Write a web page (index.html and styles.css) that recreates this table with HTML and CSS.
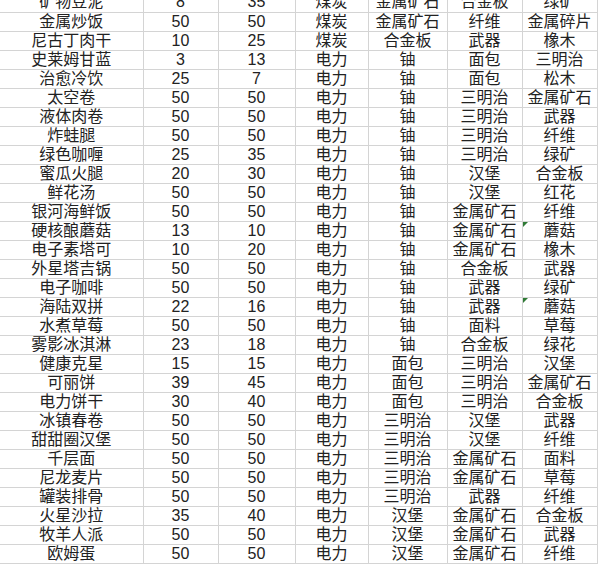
FILE: index.html
```html
<!DOCTYPE html>
<html lang="zh-CN">
<head>
<meta charset="utf-8">
<link rel="stylesheet" href="styles.css">
</head>
<body>
<div class="sheet">
<table class="grid">
<colgroup><col class="c1"><col class="c2"><col class="c3"><col class="c4"><col class="c5"><col class="c6"><col class="c7"></colgroup>
<tbody>
<tr><td>矿物豆泥</td><td>8</td><td>35</td><td>煤炭</td><td>金属矿石</td><td>合金板</td><td>绿矿</td></tr>
<tr><td>金属炒饭</td><td>50</td><td>50</td><td>煤炭</td><td>金属矿石</td><td>纤维</td><td>金属碎片</td></tr>
<tr><td>尼古丁肉干</td><td>10</td><td>25</td><td>煤炭</td><td>合金板</td><td>武器</td><td>橡木</td></tr>
<tr><td>史莱姆甘蓝</td><td>3</td><td>13</td><td>电力</td><td>铀</td><td>面包</td><td>三明治</td></tr>
<tr><td>治愈冷饮</td><td>25</td><td>7</td><td>电力</td><td>铀</td><td>面包</td><td>松木</td></tr>
<tr><td>太空卷</td><td>50</td><td>50</td><td>电力</td><td>铀</td><td>三明治</td><td>金属矿石</td></tr>
<tr><td>液体肉卷</td><td>50</td><td>50</td><td>电力</td><td>铀</td><td>三明治</td><td>武器</td></tr>
<tr><td>炸蛙腿</td><td>50</td><td>50</td><td>电力</td><td>铀</td><td>三明治</td><td>纤维</td></tr>
<tr><td>绿色咖喱</td><td>25</td><td>35</td><td>电力</td><td>铀</td><td>三明治</td><td>绿矿</td></tr>
<tr><td>蜜瓜火腿</td><td>20</td><td>30</td><td>电力</td><td>铀</td><td>汉堡</td><td>合金板</td></tr>
<tr><td>鲜花汤</td><td>50</td><td>50</td><td>电力</td><td>铀</td><td>汉堡</td><td>红花</td></tr>
<tr><td>银河海鲜饭</td><td>50</td><td>50</td><td>电力</td><td>铀</td><td>金属矿石</td><td>纤维</td></tr>
<tr><td>硬核酿蘑菇</td><td>13</td><td>10</td><td>电力</td><td>铀</td><td>金属矿石</td><td class="flag">蘑菇</td></tr>
<tr><td>电子素塔可</td><td>10</td><td>20</td><td>电力</td><td>铀</td><td>金属矿石</td><td>橡木</td></tr>
<tr><td>外星塔吉锅</td><td>50</td><td>50</td><td>电力</td><td>铀</td><td>合金板</td><td>武器</td></tr>
<tr><td>电子咖啡</td><td>50</td><td>50</td><td>电力</td><td>铀</td><td>武器</td><td>绿矿</td></tr>
<tr><td>海陆双拼</td><td>22</td><td>16</td><td>电力</td><td>铀</td><td>武器</td><td class="flag">蘑菇</td></tr>
<tr><td>水煮草莓</td><td>50</td><td>50</td><td>电力</td><td>铀</td><td>面料</td><td>草莓</td></tr>
<tr><td>雾影冰淇淋</td><td>23</td><td>18</td><td>电力</td><td>铀</td><td>合金板</td><td>绿花</td></tr>
<tr><td>健康克星</td><td>15</td><td>15</td><td>电力</td><td>面包</td><td>三明治</td><td>汉堡</td></tr>
<tr><td>可丽饼</td><td>39</td><td>45</td><td>电力</td><td>面包</td><td>三明治</td><td>金属矿石</td></tr>
<tr><td>电力饼干</td><td>30</td><td>40</td><td>电力</td><td>面包</td><td>三明治</td><td>合金板</td></tr>
<tr><td>冰镇春卷</td><td>50</td><td>50</td><td>电力</td><td>三明治</td><td>汉堡</td><td>武器</td></tr>
<tr><td>甜甜圈汉堡</td><td>50</td><td>50</td><td>电力</td><td>三明治</td><td>汉堡</td><td>纤维</td></tr>
<tr><td>千层面</td><td>50</td><td>50</td><td>电力</td><td>三明治</td><td>金属矿石</td><td>面料</td></tr>
<tr><td>尼龙麦片</td><td>50</td><td>50</td><td>电力</td><td>三明治</td><td>金属矿石</td><td>草莓</td></tr>
<tr><td>罐装排骨</td><td>50</td><td>50</td><td>电力</td><td>三明治</td><td>武器</td><td>纤维</td></tr>
<tr><td>火星沙拉</td><td>35</td><td>40</td><td>电力</td><td>汉堡</td><td>金属矿石</td><td>合金板</td></tr>
<tr><td>牧羊人派</td><td>50</td><td>50</td><td>电力</td><td>汉堡</td><td>金属矿石</td><td>武器</td></tr>
<tr><td>欧姆蛋</td><td>50</td><td>50</td><td>电力</td><td>汉堡</td><td>金属矿石</td><td>纤维</td></tr>
</tbody>
</table>
</div>
</body>
</html>
```
FILE: styles.css
```css
html, body {
  margin: 0;
  padding: 0;
  background: #ffffff;
}
.sheet {
  width: 600px;
  height: 565px;
  overflow: hidden;
}
.grid {
  margin-top: -7px;
  border-collapse: collapse;
  table-layout: fixed;
  width: 597px;
  font-family: "Liberation Sans", "Noto Sans CJK SC", sans-serif;
  font-size: 16px;
  color: #222222;
}
.c1 { width: 143px; }
.c2 { width: 75px; }
.c3 { width: 77px; }
.c4 { width: 73px; }
.c5 { width: 79px; }
.c6 { width: 75px; }
.c7 { width: 75px; }
.grid td {
  height: 19px;
  box-sizing: border-box;
  padding: 0;
  border-right: 1px solid #d4d4d4;
  border-bottom: 1px solid #d4d4d4;
  text-align: center;
  vertical-align: middle;
  line-height: 18px;
  white-space: nowrap;
  overflow: hidden;
}
.grid td.flag {
  position: relative;
}
.grid td.flag::before {
  content: "";
  position: absolute;
  left: 0;
  top: 0;
  border-top: 5px solid #2f7a35;
  border-right: 5px solid transparent;
}
```
